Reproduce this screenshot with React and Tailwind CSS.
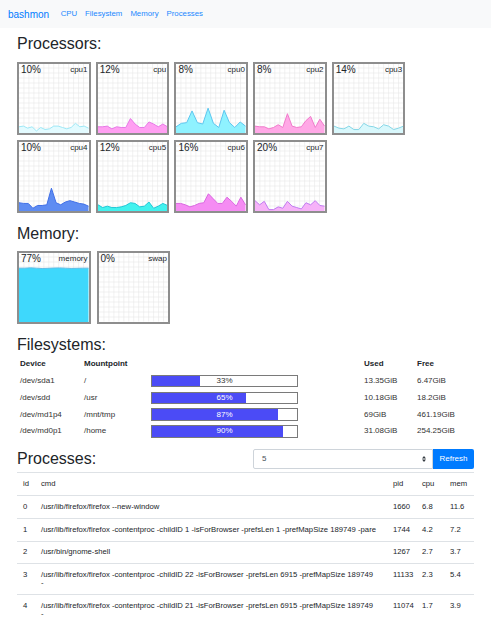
const cpus = [
  { pct: "10%", name: "cpu1", fill: "#e3fbff", stroke: "#9ee8f6", data: [9, 10, 7, 9, 3, 8, 5, 6, 10, 10, 8, 6, 8, 14, 9, 10, 7] },
  { pct: "12%", name: "cpu", fill: "#ff9ff2", stroke: "#e678e6", data: [9, 9, 10, 6, 9, 8, 8, 21, 13, 8, 8, 16, 13, 9, 13, 9] },
  { pct: "8%", name: "cpu0", fill: "#8ff2ff", stroke: "#5cc6ef", data: [9, 14, 15, 32, 15, 13, 36, 14, 8, 33, 15, 8, 16, 10] },
  { pct: "8%", name: "cpu2", fill: "#ffa8e6", stroke: "#f07acb", data: [10, 9, 9, 6, 8, 12, 8, 28, 10, 8, 9, 18, 24, 8, 20, 10] },
  { pct: "14%", name: "cpu3", fill: "#d9f8fc", stroke: "#86d6e6", data: [10, 7, 6, 10, 5, 5, 14, 10, 9, 6, 12, 10, 5, 7, 10] },
  { pct: "10%", name: "cpu4", fill: "#5e8cf2", stroke: "#3f6ee6", data: [12, 11, 11, 4, 8, 8, 9, 33, 12, 9, 13, 15, 13, 11, 10, 7] },
  { pct: "12%", name: "cpu5", fill: "#42f2ee", stroke: "#1fc8d6", data: [9, 5, 7, 5, 5, 6, 8, 12, 11, 6, 7, 13, 4, 7, 11, 8] },
  { pct: "16%", name: "cpu6", fill: "#f58cf3", stroke: "#d966df", data: [11, 11, 9, 6, 8, 11, 12, 25, 18, 11, 11, 20, 14, 7, 20, 9] },
  { pct: "20%", name: "cpu7", fill: "#f6b2f8", stroke: "#c07af0", data: [15, 9, 14, 2, 2, 6, 4, 14, 7, 5, 3, 12, 9, 15, 8, 7] },
];

const memory = [
  { pct: "77%", name: "memory", fill: "#3ed8fc", stroke: "#5fbde6", data: [78, 78, 78.5, 78, 77.5, 77.8, 78.2, 78.4, 78, 77.6, 77.8, 78, 78] },
  { pct: "0%", name: "swap", fill: "#ffffff", stroke: "#ffffff", data: [0, 0, 0] },
];

const filesystems = [
  { device: "/dev/sda1", mount: "/", pct: 33, used: "13.35GiB", free: "6.47GiB" },
  { device: "/dev/sdd", mount: "/usr", pct: 65, used: "10.18GiB", free: "18.2GiB" },
  { device: "/dev/md1p4", mount: "/mnt/tmp", pct: 87, used: "69GiB", free: "461.19GiB" },
  { device: "/dev/md0p1", mount: "/home", pct: 90, used: "31.08GiB", free: "254.25GiB" },
];

const processes = [
  { id: 0, cmd: "/usr/lib/firefox/firefox --new-window", pid: "1660", cpu: "6.8", mem: "11.6" },
  { id: 1, cmd: "/usr/lib/firefox/firefox -contentproc -childID 1 -isForBrowser -prefsLen 1 -prefMapSize 189749 -pare", pid: "1744", cpu: "4.2", mem: "7.2" },
  { id: 2, cmd: "/usr/bin/gnome-shell", pid: "1267", cpu: "2.7", mem: "3.7" },
  { id: 3, cmd: "/usr/lib/firefox/firefox -contentproc -childID 22 -isForBrowser -prefsLen 6915 -prefMapSize 189749 -", pid: "11133", cpu: "2.3", mem: "5.4" },
  { id: 4, cmd: "/usr/lib/firefox/firefox -contentproc -childID 21 -isForBrowser -prefsLen 6915 -prefMapSize 189749 -", pid: "11074", cpu: "1.7", mem: "3.9" },
];

const W = 70;
const H = 69;

function Chart({ pct, name, fill, stroke, data }) {
  const step = W / (data.length - 1);
  const pts = data.map((v, i) => `${(i * step).toFixed(2)},${(H - (v / 100) * H).toFixed(2)}`);
  const line = "M" + pts.join(" L");
  const area = `M0,${H} L${pts.join(" L")} L${W},${H} Z`;
  const grid = [];
  for (let x = 5; x < W; x += 5) grid.push(<line key={"v" + x} x1={x} y1="0" x2={x} y2={H} />);
  for (let y = 4; y < H; y += 5) grid.push(<line key={"h" + y} x1="0" y1={y} x2={W} y2={y} />);

  return (
    <div className="relative h-[73px] w-[73.5px] border-2 border-[#8e8e8e] bg-white">
      <svg className="block h-full w-full" viewBox={`0 0 ${W} ${H}`} preserveAspectRatio="none">
        <g stroke="#e8e8e8" strokeWidth="0.6">{grid}</g>
        <path d={area} fill={fill} />
        <path d={line} fill="none" stroke={stroke} strokeWidth="1" />
      </svg>
      <span className="absolute left-[2px] top-0 text-[10px] leading-[12px] text-[#212529]">{pct}</span>
      <span className="absolute right-[1px] top-0 text-[8px] leading-[11px] text-[#212529]">{name}</span>
    </div>
  );
}

function Bar({ pct }) {
  const dark = pct < 50;
  return (
    <div className="relative h-[12.4px] w-[147px] border border-[#7a7a7a] bg-white">
      <div className="h-full bg-[#4b4bf6]" style={{ width: `${pct}%` }} />
      <span
        className={`absolute inset-0 flex items-center justify-center text-[8px] leading-none ${
          dark ? "text-[#333]" : "text-white"
        }`}
      >
        {pct}%
      </span>
    </div>
  );
}

function Heading({ children, className = "" }) {
  return <h2 className={`text-[16px] font-normal leading-[19.2px] text-[#212529] ${className}`}>{children}</h2>;
}

export default function App() {
  return (
    <div className="min-h-screen bg-white font-['Liberation_Sans',Arial,sans-serif] text-[8px] text-[#212529]">
      <nav className="flex h-[28px] items-center bg-[#f8f9fa] px-[8px]">
        <a className="mr-[7.5px] text-[10px] leading-[15px] text-[#007bff]">bashmon</a>
        {["CPU", "Filesystem", "Memory", "Processes"].map((l) => (
          <a key={l} className="px-[4px] text-[7.8px] leading-[12px] text-[#1a88ff]">
            {l}
          </a>
        ))}
      </nav>

      <div className="px-[17px]">
        <Heading className="mt-[6px]">Processors:</Heading>
        <div className="mt-[9px] flex flex-wrap gap-x-[5.2px] gap-y-[5px]">
          {cpus.map((c) => (
            <Chart key={c.name} {...c} />
          ))}
        </div>

        <Heading className="mt-[11px]">Memory:</Heading>
        <div className="mt-[8px] flex gap-[6px]">
          {memory.map((c) => (
            <Chart key={c.name} {...c} />
          ))}
        </div>

        <Heading className="mt-[10.5px]">Filesystems:</Heading>
        <table className="mt-[1.7px] w-full table-fixed border-collapse">
          <colgroup>
            <col className="w-[64px]" />
            <col className="w-[67px]" />
            <col className="w-[213px]" />
            <col className="w-[53px]" />
            <col className="w-[60px]" />
          </colgroup>
          <thead>
            <tr className="h-[16.8px] text-left font-bold">
              <th className="px-[3px]">Device</th>
              <th className="px-[3px]">Mountpoint</th>
              <th className="px-[3px]"></th>
              <th className="px-[3px]">Used</th>
              <th className="px-[3px]">Free</th>
            </tr>
          </thead>
          <tbody className="text-[#333]">
            {filesystems.map((f) => (
              <tr key={f.device} className="h-[16.8px]">
                <td className="px-[3px]">{f.device}</td>
                <td className="px-[3px]">{f.mount}</td>
                <td className="px-[3px]">
                  <Bar pct={f.pct} />
                </td>
                <td className="px-[3px]">{f.used}</td>
                <td className="px-[3px]">{f.free}</td>
              </tr>
            ))}
          </tbody>
        </table>

        <div className="mt-[9px] flex items-center justify-between">
          <Heading>Processes:</Heading>
          <div className="flex h-[20px] w-[221px]">
            <div className="flex flex-1 items-center justify-between rounded-l-[2px] border border-[#ced4da] bg-white pl-[8px] pr-[6px] text-[8px] text-[#495057]">
              <span>5</span>
              <svg width="4" height="6" viewBox="0 0 4 6">
                <path d="M0 2.4 L2 0 L4 2.4 Z M0 3.6 L2 6 L4 3.6 Z" fill="#343a40" />
              </svg>
            </div>
            <button className="w-[41px] rounded-r-[2px] bg-[#007bff] text-[8px] text-white">Refresh</button>
          </div>
        </div>

        <table className="mt-[3.5px] w-full table-fixed border-collapse text-[7.7px]">
          <colgroup>
            <col className="w-[18px]" />
            <col className="w-[352px]" />
            <col className="w-[29px]" />
            <col className="w-[28px]" />
            <col className="w-[30px]" />
          </colgroup>
          <thead>
            <tr className="border-t border-[#dee2e6] text-left align-top">
              <th className="px-[6px] py-[6.8px] font-normal leading-[8.3px]">id</th>
              <th className="py-[6.8px] pl-[6px] pr-[10.6px] font-normal leading-[8.3px]">cmd</th>
              <th className="px-[6px] py-[6.8px] font-normal leading-[8.3px]">pid</th>
              <th className="px-[6px] py-[6.8px] font-normal leading-[8.3px]">cpu</th>
              <th className="px-[6px] py-[6.8px] font-normal leading-[8.3px]">mem</th>
            </tr>
          </thead>
          <tbody>
            {processes.map((p) => (
              <tr key={p.id} className="border-t border-[#dee2e6] align-top">
                <td className="px-[6px] py-[6.7px] leading-[8.3px]">{p.id}</td>
                <td className="py-[6.7px] pl-[6px] pr-[10.6px] leading-[8.3px]">{p.cmd}</td>
                <td className="px-[6px] py-[6.7px] leading-[8.3px]">{p.pid}</td>
                <td className="px-[6px] py-[6.7px] leading-[8.3px]">{p.cpu}</td>
                <td className="px-[6px] py-[6.7px] leading-[8.3px]">{p.mem}</td>
              </tr>
            ))}
          </tbody>
        </table>
      </div>
    </div>
  );
}
